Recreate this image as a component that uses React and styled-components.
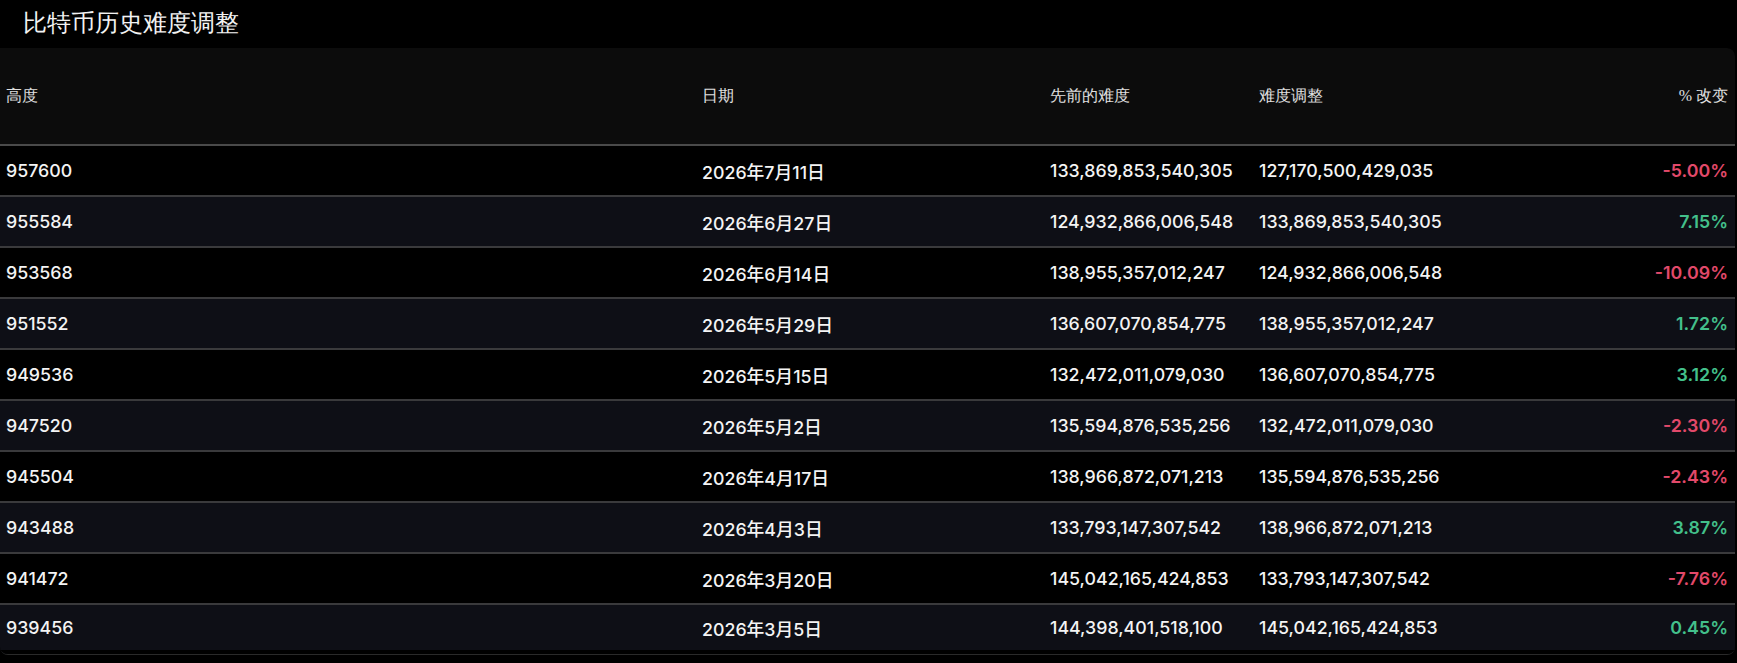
import React from "react";
import styled, { createGlobalStyle } from "styled-components";

const GlobalStyle = createGlobalStyle`
  body {
    margin: 0;
    background: #000;
    font-family: serif;
  }
`;

const rows = [
  ["957600", "2026年7月11日", "133,869,853,540,305", "127,170,500,429,035", "-5.00%"],
  ["955584", "2026年6月27日", "124,932,866,006,548", "133,869,853,540,305", "7.15%"],
  ["953568", "2026年6月14日", "138,955,357,012,247", "124,932,866,006,548", "-10.09%"],
  ["951552", "2026年5月29日", "136,607,070,854,775", "138,955,357,012,247", "1.72%"],
  ["949536", "2026年5月15日", "132,472,011,079,030", "136,607,070,854,775", "3.12%"],
  ["947520", "2026年5月2日", "135,594,876,535,256", "132,472,011,079,030", "-2.30%"],
  ["945504", "2026年4月17日", "138,966,872,071,213", "135,594,876,535,256", "-2.43%"],
  ["943488", "2026年4月3日", "133,793,147,307,542", "138,966,872,071,213", "3.87%"],
  ["941472", "2026年3月20日", "145,042,165,424,853", "133,793,147,307,542", "-7.76%"],
  ["939456", "2026年3月5日", "144,398,401,518,100", "145,042,165,424,853", "0.45%"],
];

const Page = styled.div`
  width: 1737px;
  background: #000;
`;

const Title = styled.h2`
  margin: 0;
  height: 48px;
  line-height: 46px;
  padding-left: 23px;
  font-family: serif;
  font-weight: 400;
  font-size: 24px;
  color: #f2f2f2;
`;

const Table = styled.div`
  width: 1735px;
  border-bottom: 1px solid #2a2a2a;
  border-radius: 0 8px 8px 8px;
  overflow: hidden;
`;

const grid = `
  display: grid;
  grid-template-columns: 696px 348px 209px 1fr 220px;
  align-items: center;
`;

const Head = styled.div`
  ${grid}
  height: 96px;
  background: #0c0c0c;
  border-bottom: 2px solid #4a4a4a;
  border-radius: 0 8px 0 0;
`;

const HeadCell = styled.div`
  padding: 0 7px 0 6px;
  font-family: serif;
  font-size: 16px;
  color: #e0e0e0;
  text-align: ${(p) => (p.$right ? "right" : "left")};
`;

const Row = styled.div`
  ${grid}
  height: ${(p) => (p.$last ? "45px" : "49px")};
  background: ${(p) => (p.$alt ? "#0e0f16" : "#000")};
  border-bottom: ${(p) => (p.$last ? "4px solid #000" : "2px solid #3a3a3c")};
`;

const Cell = styled.div`
  padding: 0 7px 0 6px;
  font-family: Inter, "Noto Sans CJK SC", sans-serif;
  font-size: 17.8px;
  font-weight: 500;
  color: #f4f4f4;
  white-space: nowrap;
  text-align: ${(p) => (p.$right ? "right" : "left")};
`;

const Change = styled(Cell)`
  font-weight: 600;
  color: ${(p) => (p.$down ? "#e2496a" : "#43c08b")};
`;

export default function App() {
  return (
    <Page>
      <GlobalStyle />
      <Title>比特币历史难度调整</Title>
      <Table>
        <Head>
          <HeadCell>高度</HeadCell>
          <HeadCell>日期</HeadCell>
          <HeadCell>先前的难度</HeadCell>
          <HeadCell>难度调整</HeadCell>
          <HeadCell $right>% 改变</HeadCell>
        </Head>
        {rows.map((r, i) => (
          <Row key={r[0]} $alt={i % 2 === 1} $last={i === rows.length - 1}>
            <Cell>{r[0]}</Cell>
            <Cell>{r[1]}</Cell>
            <Cell>{r[2]}</Cell>
            <Cell>{r[3]}</Cell>
            <Change $right $down={r[4].startsWith("-")}>
              {r[4]}
            </Change>
          </Row>
        ))}
      </Table>
    </Page>
  );
}
